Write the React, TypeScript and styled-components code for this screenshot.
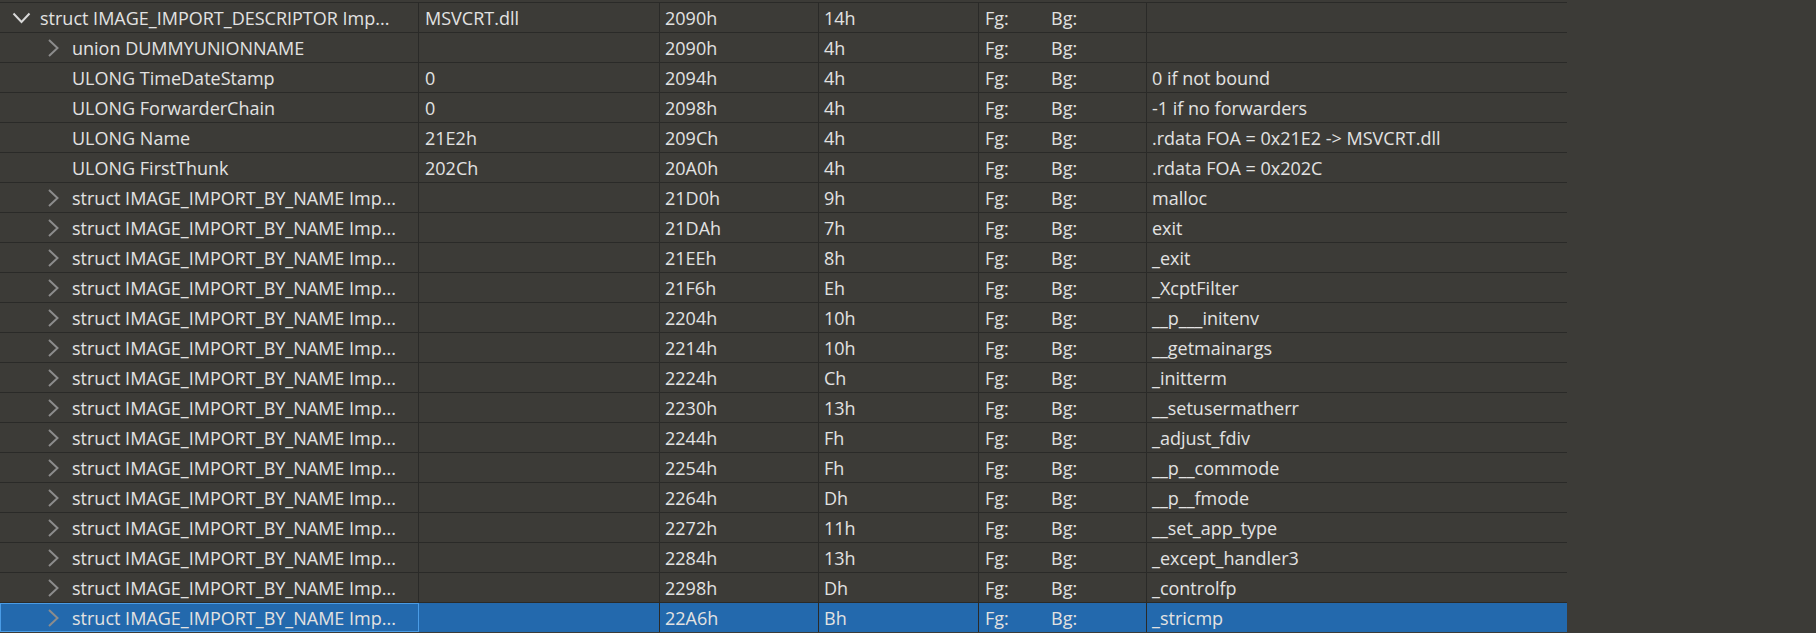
import styled, { createGlobalStyle } from 'styled-components';

const GlobalStyle = createGlobalStyle`
  html, body {
    margin: 0;
    padding: 0;
    background: #3c3b37;
    overflow: hidden;
  }
`;

interface TemplateRow {
  level: number;
  expander?: 'open' | 'closed';
  name: string;
  value: string;
  start: string;
  size: string;
  comment: string;
}

const BY_NAME = 'struct IMAGE_IMPORT_BY_NAME Imp...';

const rows: TemplateRow[] = [
  { level: 0, expander: 'open', name: 'struct IMAGE_IMPORT_DESCRIPTOR Imp...', value: 'MSVCRT.dll', start: '2090h', size: '14h', comment: '' },
  { level: 1, expander: 'closed', name: 'union DUMMYUNIONNAME', value: '', start: '2090h', size: '4h', comment: '' },
  { level: 1, name: 'ULONG TimeDateStamp', value: '0', start: '2094h', size: '4h', comment: '0 if not bound' },
  { level: 1, name: 'ULONG ForwarderChain', value: '0', start: '2098h', size: '4h', comment: '-1 if no forwarders' },
  { level: 1, name: 'ULONG Name', value: '21E2h', start: '209Ch', size: '4h', comment: '.rdata FOA = 0x21E2 -> MSVCRT.dll' },
  { level: 1, name: 'ULONG FirstThunk', value: '202Ch', start: '20A0h', size: '4h', comment: '.rdata FOA = 0x202C' },
  ...[
    ['21D0h', '9h', 'malloc'],
    ['21DAh', '7h', 'exit'],
    ['21EEh', '8h', '_exit'],
    ['21F6h', 'Eh', '_XcptFilter'],
    ['2204h', '10h', '__p___initenv'],
    ['2214h', '10h', '__getmainargs'],
    ['2224h', 'Ch', '_initterm'],
    ['2230h', '13h', '__setusermatherr'],
    ['2244h', 'Fh', '_adjust_fdiv'],
    ['2254h', 'Fh', '__p__commode'],
    ['2264h', 'Dh', '__p__fmode'],
    ['2272h', '11h', '__set_app_type'],
    ['2284h', '13h', '_except_handler3'],
    ['2298h', 'Dh', '_controlfp'],
    ['22A6h', 'Bh', '_stricmp'],
  ].map(([start, size, comment]) => ({
    level: 1,
    expander: 'closed' as const,
    name: BY_NAME,
    value: '',
    start,
    size,
    comment,
  })),
];

const SELECTED = rows.length - 1;

const Table = styled.div`
  width: 1567px;
  padding-top: 2px;
  font-family: 'Open Sans', 'Noto Sans', sans-serif;
  font-size: 18px;
  color: #e2e2e2;
`;

const Row = styled.div<{ $selected?: boolean }>`
  display: flex;
  height: 29px;
  border-top: 1px solid #2a2a28;
  background: ${({ $selected }) => ($selected ? '#2369ad' : 'transparent')};
`;

const Cell = styled.div<{ $width: number; $pad?: number; $last?: boolean }>`
  flex: 0 0 ${({ $width }) => $width}px;
  box-sizing: border-box;
  display: flex;
  align-items: center;
  padding-left: ${({ $pad }) => $pad ?? 5}px;
  border-right: ${({ $last }) => ($last ? 'none' : '1px solid #2a2a28')};
  white-space: nowrap;
  overflow: hidden;
`;

const NameCell = styled(Cell)<{ $focused?: boolean }>`
  padding-left: 0;
  outline: ${({ $focused }) => ($focused ? '1px solid #4a9ce6' : 'none')};
  outline-offset: -1px;
`;

const Expander = styled.span<{ $level: number }>`
  flex: 0 0 auto;
  width: 24px;
  margin-left: ${({ $level }) => 9 + $level * 32}px;
  margin-right: 7px;
  display: flex;
  align-items: center;
  justify-content: center;
`;

const Fg = styled.span`
  width: 66px;
`;

function Chevron({ open }: { open: boolean }) {
  if (open) {
    return (
      <svg width="19" height="12" viewBox="0 0 19 12">
        <path d="M1.5 1.5 L9.5 10 L17.5 1.5" fill="none" stroke="#d8d8d8" strokeWidth="2" />
      </svg>
    );
  }
  return (
    <svg width="13" height="18" viewBox="0 0 13 18">
      <path d="M2 1 L10.5 9 L2 17" fill="none" stroke="#8c8c8c" strokeWidth="2" />
    </svg>
  );
}

export default function App() {
  return (
    <>
      <GlobalStyle />
      <Table>
        {rows.map((r, i) => (
          <Row key={i} $selected={i === SELECTED}>
            <NameCell $width={419} $focused={i === SELECTED}>
              <Expander $level={r.level}>
                {r.expander && <Chevron open={r.expander === 'open'} />}
              </Expander>
              {r.name}
            </NameCell>
            <Cell $width={241} $pad={6}>{r.value}</Cell>
            <Cell $width={159}>{r.start}</Cell>
            <Cell $width={160}>{r.size}</Cell>
            <Cell $width={168} $pad={6}>
              <Fg>Fg:</Fg>
              <span>Bg:</span>
            </Cell>
            <Cell $width={420} $last>{r.comment}</Cell>
          </Row>
        ))}
      </Table>
    </>
  );
}
